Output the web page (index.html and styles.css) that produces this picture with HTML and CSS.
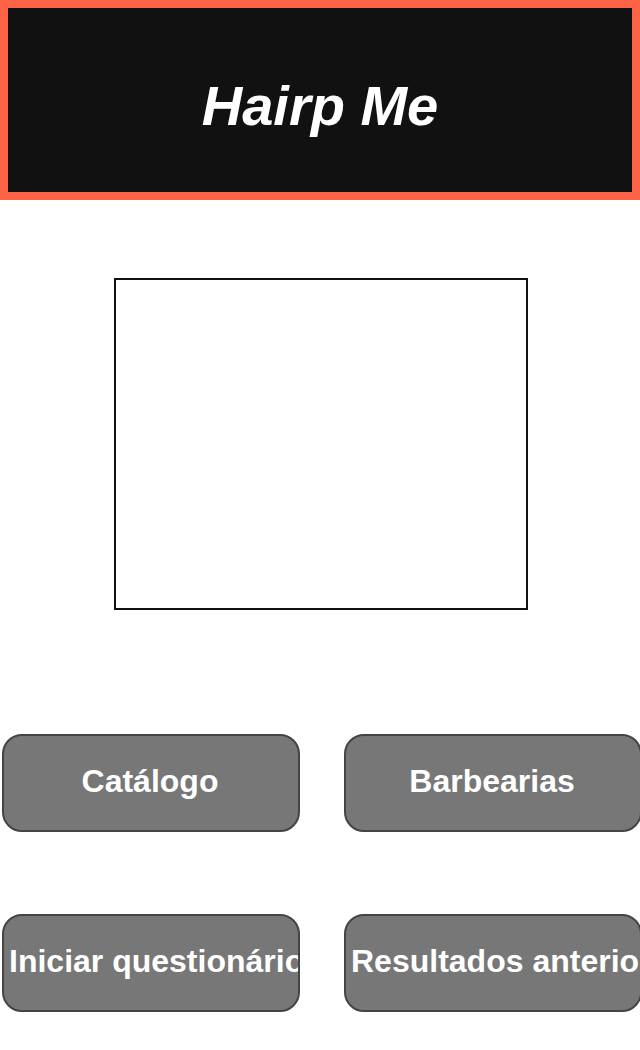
FILE: index.html
```html
<!DOCTYPE html>
<html lang="pt">
<head>
<meta charset="utf-8">
<title>Hairp Me</title>
<link rel="stylesheet" href="styles.css">
</head>
<body>
<header class="topbar">
  <h1 class="brand">Hairp Me</h1>
</header>
<main class="content">
  <div class="photo-frame"></div>
  <nav class="menu">
    <button class="menu-btn">Catálogo</button>
    <button class="menu-btn">Barbearias</button>
    <button class="menu-btn">Iniciar questionário</button>
    <button class="menu-btn">Resultados anteriores</button>
  </nav>
</main>
</body>
</html>
```

FILE: styles.css
```css
html, body {
  margin: 0;
  padding: 0;
  background: #ffffff;
  overflow-x: hidden;
  font-family: "Liberation Sans", Arial, sans-serif;
}

.topbar {
  box-sizing: border-box;
  height: 200px;
  border: 8px solid #ff6347;
  background: #111111;
  display: flex;
  align-items: center;
  justify-content: center;
}

.brand {
  margin: 12px 0 0 0;
  color: #ffffff;
  font-size: 56px;
  font-style: italic;
  font-weight: bold;
  line-height: 1;
}

.content {
  display: flex;
  flex-direction: column;
}

.photo-frame {
  box-sizing: border-box;
  width: 414px;
  height: 332px;
  margin: 78px 0 0 114px;
  border: 2px solid #111111;
  background: #ffffff;
}

.menu {
  display: grid;
  grid-template-columns: 298px 298px;
  grid-auto-rows: 98px;
  column-gap: 44px;
  row-gap: 82px;
  margin-top: 124px;
  padding-left: 2px;
}

.menu-btn {
  box-sizing: border-box;
  display: block;
  width: 298px;
  height: 98px;
  padding: 0 7px 4px 5px;
  border: 2px solid #444444;
  border-radius: 20px;
  background: #777777;
  color: #ffffff;
  font-family: "Liberation Sans", Arial, sans-serif;
  font-size: 32px;
  font-weight: bold;
  line-height: 1.15;
  text-align: center;
  white-space: nowrap;
  overflow: hidden;
}
```
